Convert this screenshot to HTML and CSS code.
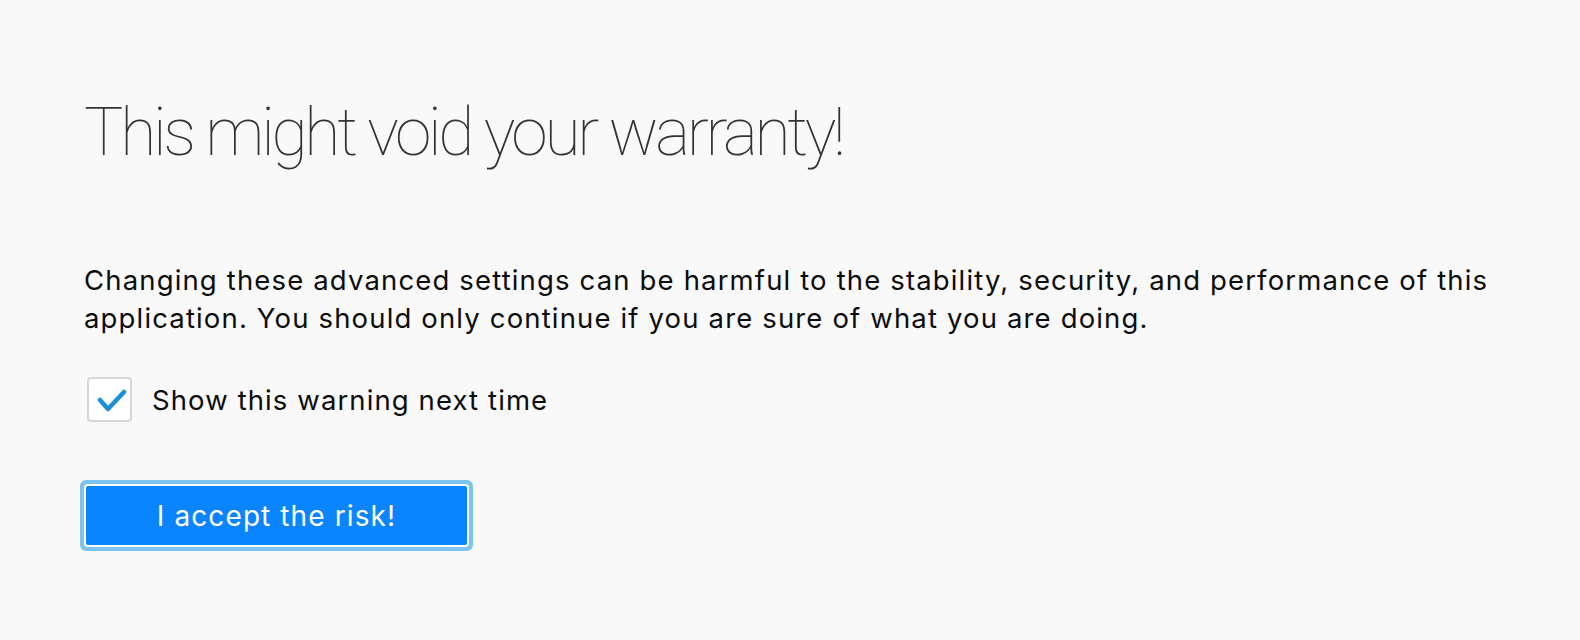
FILE: index.html
```html
<!DOCTYPE html>
<html lang="en">
<head>
    <meta charset="UTF-8">
    <title>about:config</title>
    <link rel="stylesheet" href="styles.css">
</head>
<body>
    <div class="container">
        <h1 class="title">This might void your warranty!</h1>

        <p class="warning">Changing these advanced settings can be harmful to the stability, security, and performance of this application. You should only continue if you are sure of what you are doing.</p>

        <label class="check-row">
            <span class="check-box">
                <svg width="41" height="41" viewBox="0 0 41 41">
                    <polyline points="11,21 19,30 35,13" fill="none" stroke="#1b8fd9" stroke-width="4.5" stroke-linecap="round" stroke-linejoin="round"/>
                </svg>
            </span>
            <span class="check-label">Show this warning next time</span>
        </label>

        <button class="accept-btn">I accept the risk!</button>
    </div>
</body>
</html>
```

FILE: styles.css
```css
html, body {
    margin: 0;
    padding: 0;
    background-color: #f9f9fa;
}
body {
    font-family: "Inter", "Liberation Sans", sans-serif;
    color: #0c0c0d;
}
.container {
    padding: 93px 0 40px 84px;
}
.title {
    margin: 0;
    font-family: "Roboto", "Liberation Sans", sans-serif;
    font-weight: 100;
    font-size: 66px;
    line-height: 80px;
    letter-spacing: -3.3px;
    color: #333;
}
.warning {
    margin: 88px 0 0;
    max-width: 1420px;
    font-size: 27.5px;
    line-height: 38px;
    letter-spacing: 1.15px;
}
.check-row {
    display: flex;
    align-items: center;
    margin-top: 40px;
    margin-left: 3px;
}
.check-box {
    width: 41px;
    height: 41px;
    border: 2px solid #d7d7db;
    border-radius: 4px;
    background: #fff;
    display: flex;
}
.check-label {
    margin-left: 20px;
    font-size: 27.5px;
    letter-spacing: 1.1px;
}
.accept-btn {
    display: block;
    margin: 64px 0 0 2px;
    width: 381px;
    height: 59px;
    border: none;
    border-radius: 2px;
    background-color: #0a84ff;
    color: #fff;
    font-family: "Inter", "Liberation Sans", sans-serif;
    font-size: 28px;
    letter-spacing: 1.1px;
    box-shadow: 0 0 0 2px #fff, 0 0 0 6px #7cc4ee;
    cursor: pointer;
}
```
